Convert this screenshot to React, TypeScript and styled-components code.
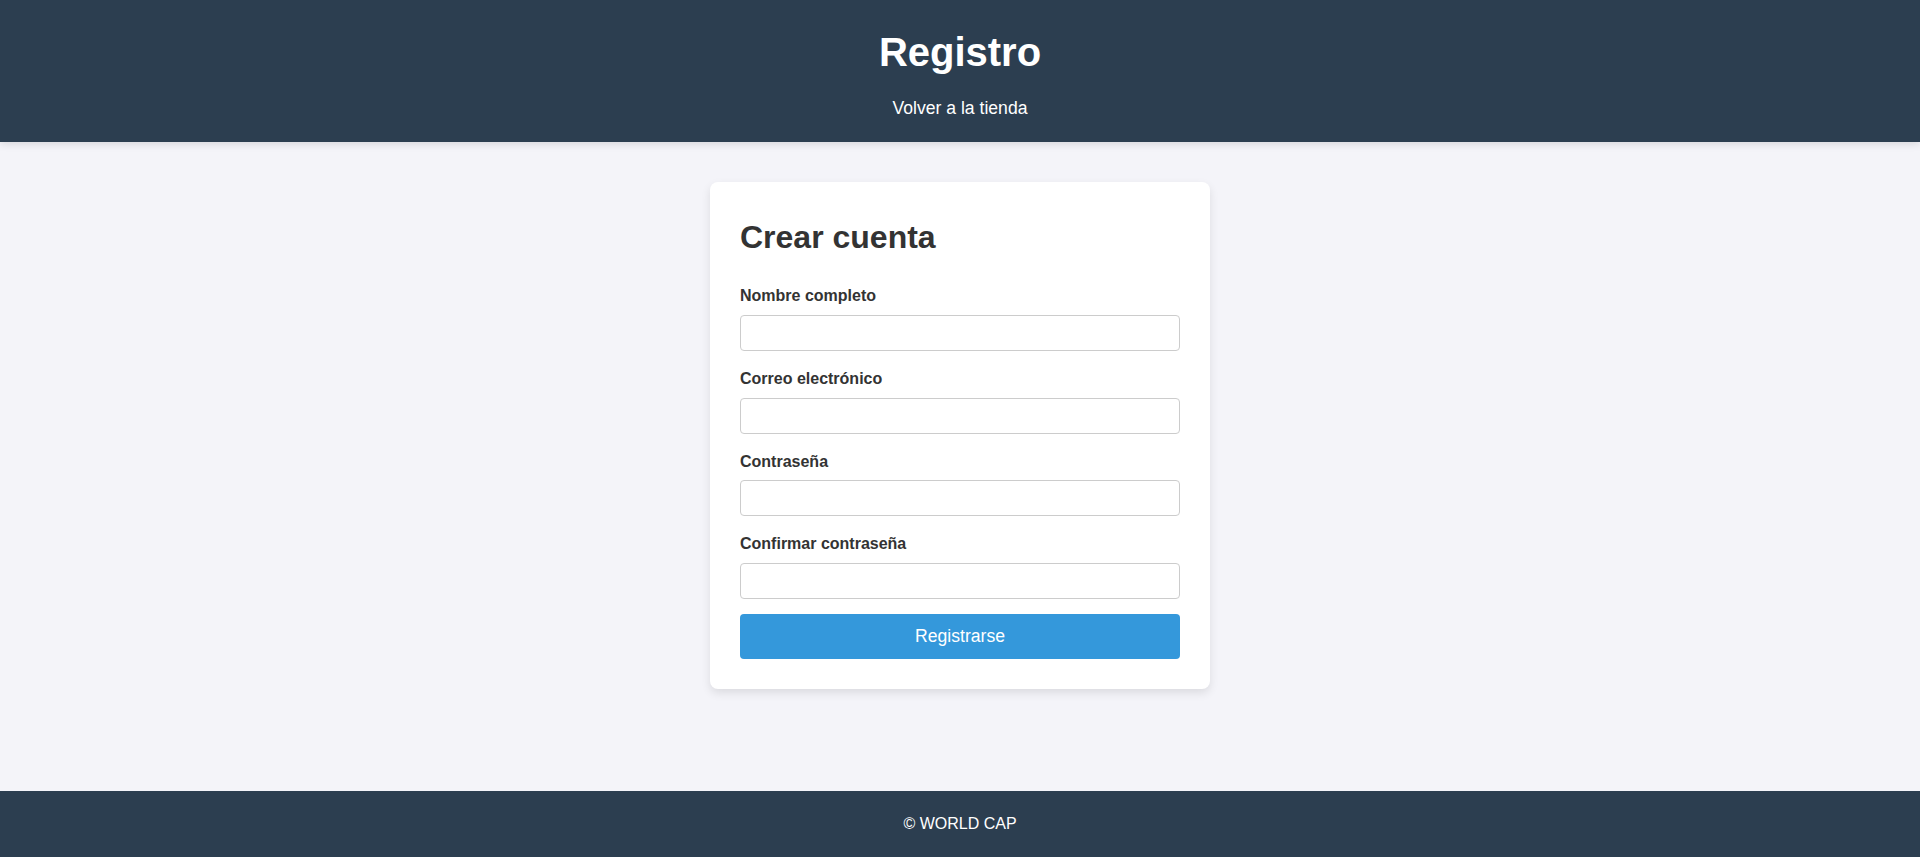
import React from 'react';
import styled, { createGlobalStyle } from 'styled-components';

const GlobalStyle = createGlobalStyle`
  * {
    box-sizing: border-box;
  }

  html, body {
    margin: 0;
    padding: 0;
  }

  body {
    font-family: "Liberation Sans", Arial, sans-serif;
    line-height: 1.6;
    background: #f4f4f9;
    color: #333;
  }
`;

const Page = styled.div`
  min-height: 100vh;
  display: flex;
  flex-direction: column
`;

const Header = styled.header`
  background: #2c3e50;
  color: #fff;
  text-align: center;
  padding: 20px;
  box-shadow: 0 2px 8px rgba(0, 0, 0, 0.12);
  position: relative;
  z-index: 1
`;

const HeaderTitle = styled.h1`
  margin: 0 0 10px;
  font-size: 40px;
  font-weight: 700
`;

const BackLink = styled.a`
  color: #fff;
  text-decoration: none;
  font-size: 17.6px;
  cursor: pointer
`;

const Main = styled.main`
  flex: 1;
  display: flex;
  justify-content: center;
  align-items: flex-start;
  padding: 40px 20px
`;

const Card = styled.div`
  width: 500px;
  background: #fff;
  border-radius: 8px;
  padding: 30px;
  box-shadow: 0 4px 10px rgba(0, 0, 0, 0.1)
`;

const CardTitle = styled.h2`
  margin: 0 0 20px;
  font-size: 32px;
  font-weight: 700;
  color: #333
`;

const FormGroup = styled.div`
  margin-bottom: 15px
`;

const Label = styled.label`
  display: block;
  font-weight: 700;
  font-size: 16px;
  color: #333;
  margin-bottom: 6px
`;

const Input = styled.input`
  display: block;
  width: 100%;
  height: 36px;
  padding: 8px;
  border: 1px solid #ccc;
  border-radius: 4px;
  font-family: inherit;
  font-size: 16px;
  outline: none
`;

const SubmitButton = styled.button`
  display: block;
  width: 100%;
  padding: 12px;
  border: none;
  border-radius: 4px;
  background: #3498db;
  color: #fff;
  font-family: inherit;
  font-size: 17.6px;
  line-height: 20.8px;
  cursor: pointer
`;

const Footer = styled.footer`
  background: #2c3e50;
  color: #fff;
  text-align: center;
  padding: 20px;
  font-size: 16px
`;

const fields = [
  { id: 'nombre', label: 'Nombre completo', type: 'text' },
  { id: 'correo', label: 'Correo electrónico', type: 'email' },
  { id: 'password', label: 'Contraseña', type: 'password' },
  { id: 'confirmar', label: 'Confirmar contraseña', type: 'password' }
];

const App = () => {

  return (
    <Page>
      <GlobalStyle />

      <Header>
        <HeaderTitle>Registro</HeaderTitle>
        <BackLink>Volver a la tienda</BackLink>
      </Header>

      <Main>
        <Card>
          <CardTitle>Crear cuenta</CardTitle>

          <form onSubmit={e => e.preventDefault()}>
            {fields.map(field => {

              return (
                <FormGroup key={field.id}>
                  <Label htmlFor={field.id}>{field.label}</Label>
                  <Input id={field.id} type={field.type} />
                </FormGroup>
              );
            })}

            <SubmitButton type={'submit'}>Registrarse</SubmitButton>
          </form>
        </Card>
      </Main>

      <Footer>© WORLD CAP</Footer>
    </Page>
  );
};

export default App;
